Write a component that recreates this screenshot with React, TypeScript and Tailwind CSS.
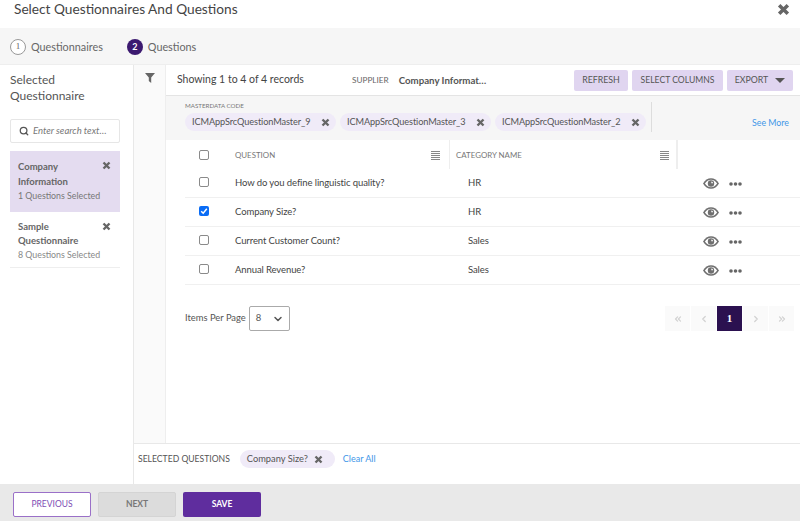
import { ChevronDown, ChevronLeft, ChevronRight, ChevronsLeft, ChevronsRight, Search } from "lucide-react";

const font = "font-['Lato','Liberation_Sans',sans-serif]";

const rows = [
  { question: "How do you define linguistic quality?", category: "HR", checked: false },
  { question: "Company Size?", category: "HR", checked: true },
  { question: "Current Customer Count?", category: "Sales", checked: false },
  { question: "Annual Revenue?", category: "Sales", checked: false },
];

function CloseIcon({ size }: { size: number }) {
  return (
    <svg width={size} height={size} viewBox="0 0 12 12" className="shrink-0 text-[#666]" aria-hidden="true">
      <path d="M2 2 10 10M10 2 2 10" fill="none" stroke="currentColor" strokeWidth="3.200" />
    </svg>
  );
}

function Chip({ label }: { label: string }) {
  return (
    <span className="flex h-[18px] w-[151px] shrink-0 items-center justify-between rounded-full bg-[#f0ebf8] pr-[6px] pl-[7px] text-[9.200px] tracking-[-0.1px] whitespace-nowrap text-[#555]">
      {label}
      <CloseIcon size={9} />
    </span>
  );
}

function MenuLines() {
  return (
    <svg width="9" height="9" viewBox="0 0 9 9" className="text-[#888]" aria-hidden="true">
      {[0.5, 2.5, 4.5, 6.5, 8.5].map((y) => (
        <line key={y} x1="0" x2="9" y1={y} y2={y} stroke="currentColor" strokeWidth="1" />
      ))}
    </svg>
  );
}

function Eye() {
  return (
    <svg width="16" height="11" viewBox="0 0 16 11" aria-hidden="true">
      <path d="M0 5.500C2 2 4.800 0.200 8 0.200s6 1.800 8 5.300c-2 3.500-4.800 5.300-8 5.300s-6-1.800-8-5.300Z" fill="#6f6f6f" />
      <path d="M1.900 5.500C3.400 3.100 5.500 1.700 8 1.700s4.600 1.400 6.100 3.800C12.600 7.900 10.500 9.300 8 9.300S3.400 7.900 1.900 5.500Z" fill="#fff" />
      <circle cx="8" cy="5.500" r="3.200" fill="#6f6f6f" />
      <path d="M8.300 3.400a2 2 0 0 1 1.800 1.900H8.300Z" fill="#fff" />
    </svg>
  );
}

function Dots() {
  return (
    <svg width="13" height="4" viewBox="0 0 13 4" aria-hidden="true">
      {[2, 6.500, 11].map((x) => (
        <circle key={x} cx={x} cy="2" r="1.800" fill="#666" />
      ))}
    </svg>
  );
}

function Checkbox({ checked }: { checked?: boolean }) {
  if (checked) {
    return (
      <span className="flex size-[10px] items-center justify-center rounded-[2px] bg-[#0a6cf5]">
        <svg width="8" height="8" viewBox="0 0 8 8" aria-hidden="true">
          <path d="M1.200 4.200 3.200 6.200 6.800 1.800" fill="none" stroke="#fff" strokeWidth="1.500" />
        </svg>
      </span>
    );
  }
  return <span className="block size-[10px] rounded-[2px] border border-[#8a8a8a] bg-white" />;
}

function PageButton({ children, active }: { children: React.ReactNode; active?: boolean }) {
  return (
    <span className={`flex h-[25px] w-[25px] items-center justify-center text-[11px] font-bold ${active ? "bg-[#2b1150] font-['Liberation_Serif',serif] text-white" : "bg-[#fafafa] text-[#d2d2d2]"}`}>
      {children}
    </span>
  );
}

export default function App() {
  return (
    <div className={`flex h-[521px] w-[800px] flex-col overflow-hidden bg-white ${font} text-[#555]`}>
      <header className="flex h-[28px] shrink-0 items-start justify-between pr-[10px] pl-[14px]">
        <h1 className="text-[13.700px] leading-[18px] text-[#444]">Select Questionnaires And Questions</h1>
        <div className="mt-[3px]"><CloseIcon size={13} /></div>
      </header>

      <div className="flex h-[36px] shrink-0 items-center bg-[#f6f6f6] pt-[2px] pl-[10px] text-[10.800px] text-[#666]">
        <span className="flex size-[16px] items-center justify-center rounded-full border border-[#999] bg-white font-['Liberation_Serif',serif] text-[9px]">1</span>
        <span className="ml-[5px]">Questionnaires</span>
        <span className="ml-[24px] flex size-[16px] items-center justify-center rounded-full bg-[#3c1a70] text-[9px] font-bold text-white">2</span>
        <span className="ml-[5px]">Questions</span>
      </div>

      <div className="flex min-h-0 flex-1 border-t border-[#eee]">
        <aside className="w-[134px] shrink-0 border-r border-[#e8e8e8] pt-[7px] pr-[13px] pl-[10px]">
          <p className="text-[12px] leading-[16px] text-[#555]">Selected Questionnaire</p>
          <div className="mt-[15px] flex h-[24px] items-center rounded-[2px] border border-[#e6e6e6] pl-[8px]">
            <Search className="size-[10px] text-[#555]" strokeWidth={3} aria-hidden="true" />
            <span className="ml-[4px] text-[9.500px] whitespace-nowrap text-[#777] italic">Enter search text…</span>
          </div>
          <div className="mt-[8px] flex h-[61px] items-start justify-between bg-[#e4dcf0] pt-[8px] pr-[9px] pl-[8px]">
            <div>
              <p className="w-[60px] text-[9.500px] leading-[15px] font-bold text-[#666]">Company Information</p>
              <p className="text-[8.800px] leading-[14px] whitespace-nowrap text-[#777]">1 Questions Selected</p>
            </div>
            <div className="mt-[2px]"><CloseIcon size={9} /></div>
          </div>
          <div className="flex h-[56px] items-start justify-between border-b border-[#eee] pt-[8px] pr-[9px] pl-[8px]">
            <div>
              <p className="w-[60px] text-[9.500px] leading-[14px] font-bold text-[#666]">Sample Questionnaire</p>
              <p className="text-[8.800px] leading-[13px] whitespace-nowrap text-[#888]">8 Questions Selected</p>
            </div>
            <div className="mt-[2px]"><CloseIcon size={9} /></div>
          </div>
        </aside>

        <div className="flex min-w-0 flex-1 flex-col">
          <div className="flex min-h-0 flex-1">
            <div className="flex w-[32px] shrink-0 justify-center border-r border-[#eee] bg-[#fafafa] pt-[8px]">
              <svg width="10" height="10" viewBox="0 0 10 10" aria-hidden="true">
                <path d="M0 0h10L6.200 4.600V10L3.800 8V4.600Z" fill="#666" />
              </svg>
            </div>
            <div className="min-w-0 flex-1">
              <div className="flex h-[31px] items-center border-b border-[#e4e4e4] pr-[7px] pl-[11px]">
                <span className="w-[175px] shrink-0 text-[10.500px] whitespace-nowrap text-[#444]">Showing 1 to 4 of 4 records</span>
                <span className="text-[8.200px] text-[#666]">SUPPLIER</span>
                <span className="ml-[10px] text-[9.700px] font-bold text-[#555]">Company Informat…</span>
                <span className="ml-auto flex h-[21px] w-[54px] items-center justify-center rounded-[2px] bg-[#e0d5f0] text-[8.800px] text-[#555]">REFRESH</span>
                <span className="ml-[4px] flex h-[21px] w-[91px] items-center justify-center rounded-[2px] bg-[#e0d5f0] text-[8.600px] text-[#555]">SELECT COLUMNS</span>
                <span className="ml-[4px] flex h-[21px] w-[66px] items-center justify-center gap-[7px] rounded-[2px] bg-[#e0d5f0] text-[8.800px] text-[#555]">
                  EXPORT
                  <svg width="10" height="5" viewBox="0 0 10 5" aria-hidden="true">
                    <path d="M0 0h10L5 5Z" fill="#555" />
                  </svg>
                </span>
              </div>

              <div className="flex h-[44px] bg-[#f6f6f6] pl-[19px]">
                <div className="mt-[6px] mb-[8px] flex w-[467px] flex-col border-r border-[#ddd]">
                  <span className="text-[6.200px] leading-[8px] text-[#777]">MASTERDATA CODE</span>
                  <div className="mt-[3px] flex gap-[4px]">
                    <Chip label="ICMAppSrcQuestionMaster_9" />
                    <Chip label="ICMAppSrcQuestionMaster_3" />
                    <Chip label="ICMAppSrcQuestionMaster_2" />
                  </div>
                </div>
                <span className="mt-[20px] ml-auto pr-[11px] text-[8.800px] text-[#3f97e8]">See More</span>
              </div>

              <div className="pl-[19px]">
                <div className="flex h-[29px] items-center text-[7.900px] text-[#777]">
                  <div className="flex w-[38px] shrink-0 justify-center"><Checkbox /></div>
                  <div className="ml-[12px] flex h-full w-[215px] shrink-0 items-center justify-between border-r border-[#eee] pt-[2px] pr-[9px]">
                    QUESTION
                    <MenuLines />
                  </div>
                  <div className="flex h-full w-[228px] shrink-0 items-center justify-between border-r-2 border-[#eee] pt-[2px] pr-[7px] pl-[6px]">
                    CATEGORY NAME
                    <MenuLines />
                  </div>
                </div>
                {rows.map((row) => (
                  <div key={row.question} className="flex h-[29px] items-center border-b border-[#f0f0f0] pt-[1px] text-[9.500px] tracking-[-0.1px] text-[#444]">
                    <div className="flex w-[38px] shrink-0 justify-center pb-[4px]"><Checkbox checked={row.checked} /></div>
                    <div className="ml-[12px] w-[233px] shrink-0">{row.question}</div>
                    <div className="w-[235px] shrink-0">{row.category}</div>
                    <div className="flex items-center gap-[10px]"><Eye /><Dots /></div>
                  </div>
                ))}

                <div className="mt-[21px] flex items-center pr-[6px]">
                  <span className="text-[9.400px] text-[#555]">Items Per Page</span>
                  <span className="ml-[3px] flex h-[25px] w-[41px] items-center justify-between rounded-[2px] border border-[#aaa] pr-[5px] pl-[6px] text-[9.500px]">
                    8
                    <ChevronDown className="size-[12px] text-[#555]" strokeWidth={3} aria-hidden="true" />
                  </span>
                  <div className="ml-auto flex items-center gap-[1px]">
                    <PageButton><ChevronsLeft className="size-[10px]" strokeWidth={3} /></PageButton>
                    <PageButton><ChevronLeft className="size-[10px]" strokeWidth={3} /></PageButton>
                    <PageButton active>1</PageButton>
                    <PageButton><ChevronRight className="size-[10px]" strokeWidth={3} /></PageButton>
                    <PageButton><ChevronsRight className="size-[10px]" strokeWidth={3} /></PageButton>
                  </div>
                </div>
              </div>
            </div>
          </div>

          <div className="flex h-[41px] shrink-0 items-start border-t border-[#e8e8e8] pt-[6px] pl-[4px]">
            <div className="flex h-[18px] items-center">
              <span className="text-[8.600px] whitespace-nowrap text-[#555]">SELECTED QUESTIONS</span>
              <span className="ml-[10px] flex h-[18px] w-[95px] items-center justify-between rounded-full bg-[#f0ebf8] pr-[12px] pl-[7px] text-[9.300px] whitespace-nowrap text-[#555]">
                Company Size?
                <CloseIcon size={9} />
              </span>
              <span className="ml-[8px] text-[9px] text-[#3f97e8]">Clear All</span>
            </div>
          </div>
        </div>
      </div>

      <footer className="flex h-[37px] shrink-0 items-start gap-[7px] bg-[#e9e9e9] pt-[8px] pl-[13px] text-[8.500px] font-bold">
        <span className="flex h-[25px] w-[78px] items-center justify-center rounded-[2px] border border-[#9a70c8] bg-white font-normal text-[#7e4fb5]">PREVIOUS</span>
        <span className="flex h-[25px] w-[78px] items-center justify-center rounded-[2px] border border-[#d4d4d4] bg-[#dcdcdc] text-[#777]">NEXT</span>
        <span className="flex h-[25px] w-[78px] items-center justify-center rounded-[2px] bg-[#5f2d9e] text-white">SAVE</span>
      </footer>
    </div>
  );
}
